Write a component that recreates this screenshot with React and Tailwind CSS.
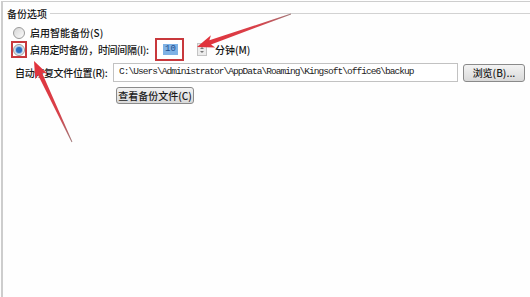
const ARROWS = [
  { id: "a1", tail: [291, 14], tip: [197, 47] },
  { id: "a2", tail: [72, 142], tip: [34, 61] },
];

function arrowPoints({ tail, tip }) {
  const [x0, y0] = tail;
  const [x1, y1] = tip;
  const dx = x1 - x0;
  const dy = y1 - y0;
  const len = Math.hypot(dx, dy);
  const ux = dx / len;
  const uy = dy / len;
  const nx = -uy;
  const ny = ux;
  const L = 17, W = 6.5, w1 = 2.3, w0 = 0.4, notch = 3;
  const bx = x1 - ux * L;
  const by = y1 - uy * L;
  const ix = x1 - ux * (L - notch);
  const iy = y1 - uy * (L - notch);
  const pts = [
    [x0 + nx * w0, y0 + ny * w0],
    [ix + nx * w1, iy + ny * w1],
    [bx + nx * W, by + ny * W],
    [x1, y1],
    [bx - nx * W, by - ny * W],
    [ix - nx * w1, iy - ny * w1],
    [x0 - nx * w0, y0 - ny * w0],
  ];
  return pts.map((p) => p.map((v) => v.toFixed(1)).join(",")).join(" ");
}

function Radio({ checked }) {
  return (
    <span className="w-[12px] h-[12px] rounded-full border border-[#9a9a9a] bg-gradient-to-br from-[#d6d6d6] to-[#fbfbfb] flex items-center justify-center">
      {checked && <span className="w-[6px] h-[6px] rounded-full bg-[#2d6fbf] ring-1 ring-[#9cc3ea]" />}
    </span>
  );
}

function WinButton({ children, className }) {
  return (
    <button className={"flex items-center justify-center rounded-[3px] border border-[#8a8a8a] bg-gradient-to-b from-[#f3f3f3] to-[#d9d9d9] text-[#1a1a1a] " + className}>
      {children}
    </button>
  );
}

export default function App() {
  const font = { fontFamily: '"Noto Sans CJK SC", "Noto Sans", sans-serif' };
  return (
    <div className="relative w-[530px] h-[297px] overflow-hidden bg-[#fefefe] pt-px text-[10px] font-medium text-[#151515]" style={font}>
      <div className="h-full ml-px border-t border-l-2 border-[#cdcdcd]">
        {/* group title */}
        <div className="h-[22px] flex items-center pl-[4px] gap-[3px]">
          <span>备份选项</span>
          <div className="flex-1 border-t border-[#d2d2d2]" />
        </div>

        <div className="h-[17px] flex items-center pl-[8px]">
          <span className="w-[16px] h-[17px] flex items-center justify-center">
            <Radio />
          </span>
          <span className="ml-[3px]">启用智能备份(S)</span>
        </div>

        <div className="h-[17px] flex items-center pl-[8px]">
          <span className="w-[16px] h-[17px] flex items-center justify-center border-2 border-[#c8383c]">
            <Radio checked />
          </span>
          <span className="ml-[3px] w-[125px] shrink-0 whitespace-nowrap tracking-[-0.3px]">启用定时备份，时间间隔(I):</span>
          <span className="w-[29px] h-[23px] shrink-0 border-2 border-[#c8383c] bg-white flex items-center pl-[6px]">
            <span className="h-[11px] px-[2px] bg-[#7fb2e5] text-[#1d4f91] flex items-center leading-none text-[9px]" style={{ fontFamily: '"Liberation Mono", monospace' }}>10</span>
          </span>
          <span className="ml-[13px] w-[10px] h-[13px] shrink-0 border border-[#c4c4c4] bg-[#ececec] flex flex-col items-center justify-center gap-[2px]">
            <span className="w-0 h-0 border-x-[2px] border-x-transparent border-b-[2px] border-b-[#777]" />
            <span className="w-0 h-0 border-x-[2px] border-x-transparent border-t-[2px] border-t-[#777]" />
          </span>
          <span className="ml-[8px]">分钟(M)</span>
        </div>

        <div className="mt-[5px] h-[19px] flex items-center pl-[12px]">
          <span className="w-[98px] shrink-0 whitespace-nowrap tracking-[-0.35px]">自动恢复文件位置(R):</span>
          <div className="w-[345px] h-[19px] shrink-0 border border-[#c2c2c2] bg-white flex items-center pl-[5px] whitespace-nowrap overflow-hidden text-[9.5px] font-normal tracking-[-0.95px] text-[#222]" style={{ fontFamily: '"Liberation Mono", monospace' }}>
            C:\Users\Administrator\AppData\Roaming\Kingsoft\office6\backup
          </div>
          <WinButton className="ml-[5px] w-[62px] h-[18px] shrink-0">浏览(B)...</WinButton>
        </div>

        <div className="mt-[5px] pl-[113px]">
          <WinButton className="w-[78px] h-[17px]">查看备份文件(C)</WinButton>
        </div>
      </div>

      <svg className="absolute inset-0 w-full h-full pointer-events-none" viewBox="0 0 530 297">
        <defs>
          {ARROWS.map((a) => (
            <linearGradient key={a.id} id={a.id} gradientUnits="userSpaceOnUse" x1={a.tail[0]} y1={a.tail[1]} x2={a.tip[0]} y2={a.tip[1]}>
              <stop offset="0" stopColor="#a07a7a" />
              <stop offset="0.35" stopColor="#d8414a" />
              <stop offset="1" stopColor="#e2323b" />
            </linearGradient>
          ))}
        </defs>
        {ARROWS.map((a) => (
          <polygon key={a.id} points={arrowPoints(a)} fill={`url(#${a.id})`} />
        ))}
      </svg>
    </div>
  );
}
